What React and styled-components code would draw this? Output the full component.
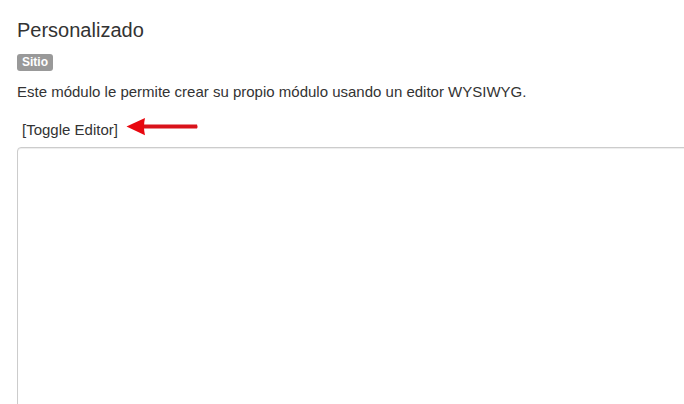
import React from "react";
import styled, { createGlobalStyle } from "styled-components";

const Global = createGlobalStyle`
  html, body { margin: 0; padding: 0; background: #fff; overflow: hidden; }
  body { font-family: "Liberation Sans", Arial, sans-serif; color: #333; }
`;

const Page = styled.div`
  display: flex;
  flex-direction: column;
  align-items: flex-start;
  width: 684px;
  height: 404px;
  padding: 17px 0 0 17px;
  box-sizing: border-box;
  overflow: hidden;
`;

const Title = styled.h2`
  margin: 0;
  font-size: 20px;
  font-weight: 400;
  line-height: 26px;
  color: #333;
`;

const Badge = styled.span`
  display: inline-block;
  margin-top: 11px;
  padding: 2px 5px 3px;
  background: #999;
  color: #fff;
  font-size: 12px;
  font-weight: 700;
  line-height: 12px;
  border-radius: 3px;
`;

const Description = styled.p`
  margin: 11px 0 0;
  font-size: 15px;
  line-height: 20px;
  color: #333;
`;

const ToggleRow = styled.div`
  display: flex;
  align-items: flex-start;
  gap: 8px;
  margin-top: 18px;
  padding-left: 5px;
  height: 20px;
`;

const ToggleLink = styled.span`
  font-size: 15px;
  line-height: 20px;
  color: #333;
`;

const ArrowSvg = styled.svg`
  display: block;
  margin-top: -2px;
  flex: none;
`;

const Editor = styled.div`
  margin-top: 7px;
  width: 700px;
  height: 300px;
  flex: none;
  border: 1px solid #ccc;
  border-radius: 4px;
  box-shadow: inset 0 1px 1px rgba(0, 0, 0, 0.075);
  background: #fff;
`;

const Arrow = () => (
  <ArrowSvg width="73" height="18" viewBox="0 0 73 18">
    <path d="M16 6.6 H71 Q72 8.6 71 10.6 H16 Z" fill="#d9131b" />
    <path d="M0.5 8.6 L19 0 Q17 8.6 19 17.2 Z" fill="#e8070f" />
  </ArrowSvg>
);

export default function App() {
  return (
    <>
      <Global />
      <Page>
        <Title>Personalizado</Title>
        <Badge>Sitio</Badge>
        <Description>
          Este módulo le permite crear su propio módulo usando un editor WYSIWYG.
        </Description>
        <ToggleRow>
          <ToggleLink>[Toggle Editor]</ToggleLink>
          <Arrow />
        </ToggleRow>
        <Editor />
      </Page>
    </>
  );
}
